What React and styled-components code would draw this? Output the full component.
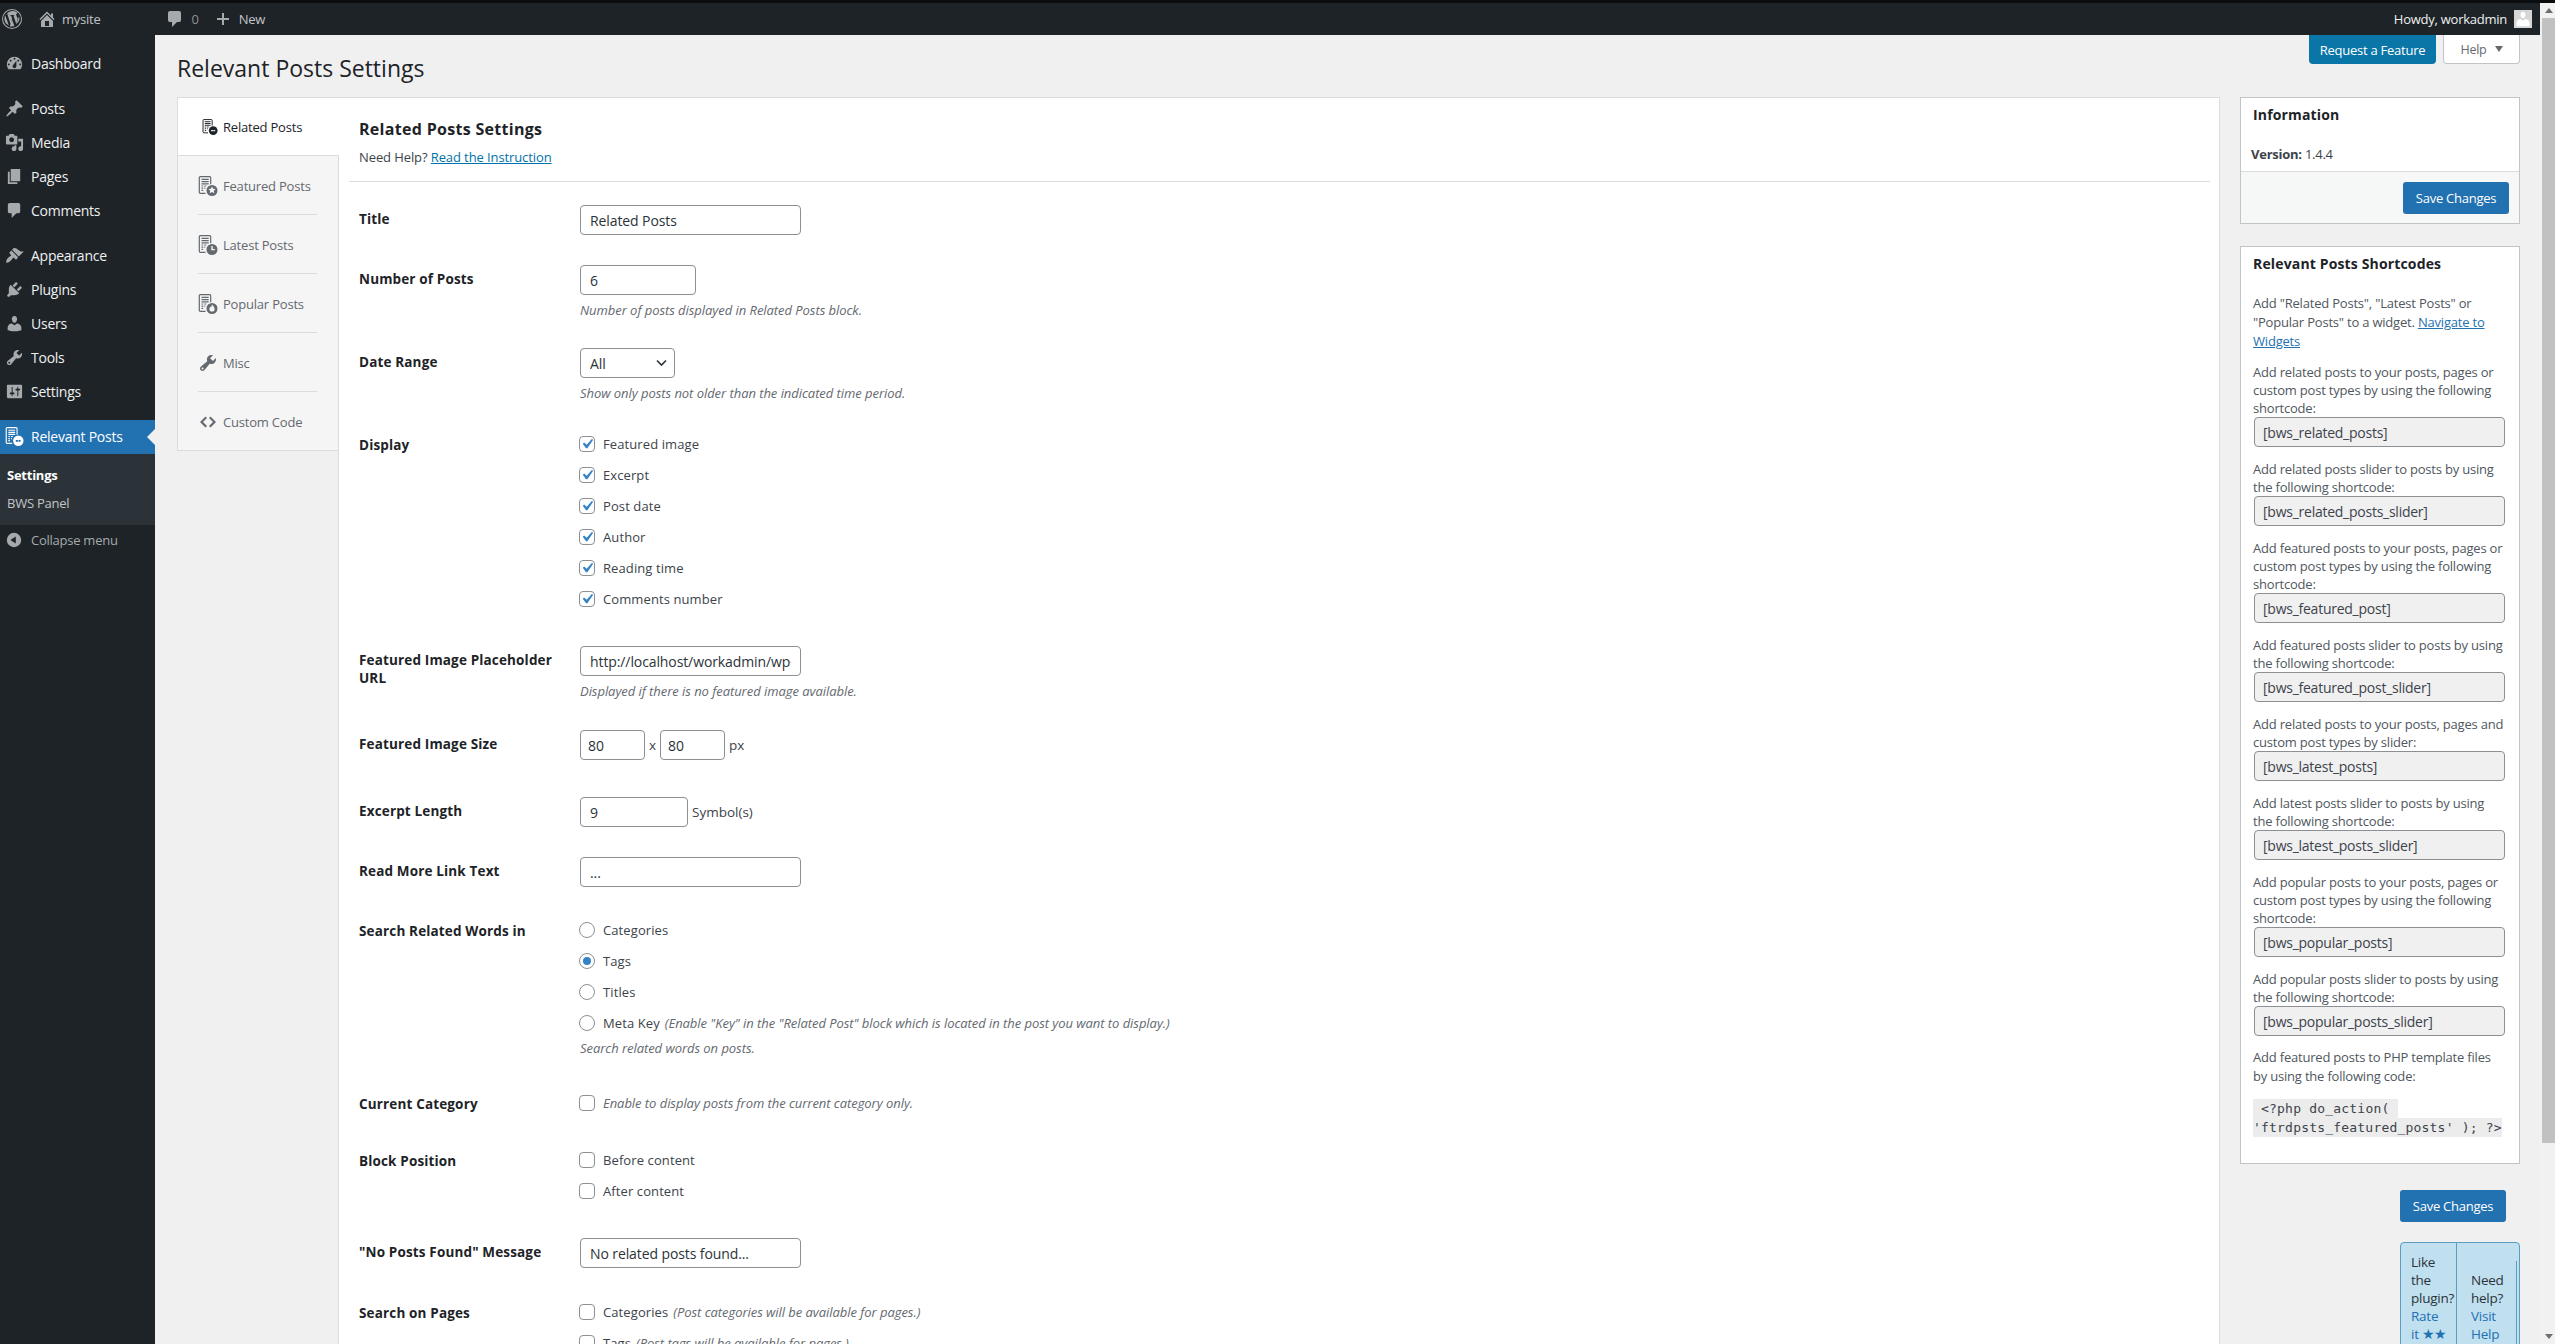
import React from "react";
import styled, { createGlobalStyle } from "styled-components";

const FONT = `"Open Sans", "Noto Sans", sans-serif`;

const GlobalStyle = createGlobalStyle`
  html, body {
    margin: 0;
    height: 100%;
    overflow: hidden;
    background: #f0f0f1;
  }
  * { box-sizing: border-box; }
  body {
    font-family: ${FONT};
    font-size: 13px;
    letter-spacing: -0.25px;
    color: #3c434a;
  }
`;

const Page = styled.div`
  width: 2555px;
  height: 1344px;
  display: flex;
  flex-direction: column;
  overflow: hidden;
  background: #f0f0f1;
`;
const TopStrip = styled.div`
  height: 3px;
  flex: none;
  background: #0b0c0d;
`;
const Screen = styled.div`
  flex: 1;
  min-height: 0;
  display: flex;
`;
const Frame = styled.div`
  flex: 1;
  min-width: 0;
  display: flex;
  flex-direction: column;
`;
const ScrollBar = styled.div`
  width: 15px;
  flex: none;
  background: #f1f1f1;
  padding-left: 2px;
  display: flex;
  flex-direction: column;
  align-items: stretch;
`;
const ScrollArrow = styled.div`
  height: 15px;
  flex: none;
  display: flex;
  align-items: center;
  justify-content: center;
  svg { width: 8px; height: 5px; fill: #6e6e6e; }
`;
const ScrollThumb = styled.div`
  height: 1125px;
  background: #c1c1c1;
`;
const ScrollTrack = styled.div`
  flex: 1;
`;

/* admin bar */
const AdminBar = styled.header`
  height: 32px;
  flex: none;
  background: #1d2327;
  color: #c3c4c7;
  display: flex;
  align-items: center;
  padding: 0 8px 0 2px;
  font-size: 13px;
`;
const BarItem = styled.div`
  display: flex;
  align-items: center;
  gap: ${(p) => p.$gap || 6}px;
  margin-left: ${(p) => p.$left || 0}px;
  color: ${(p) => p.$color || "#c3c4c7"};
  svg { fill: #a7aaad; display: block; }
`;
const BarSpacer = styled.div`
  flex: 1;
`;
const Avatar = styled.div`
  width: 18px;
  height: 18px;
  background: #d6d6d6;
  margin-left: 7px;
  svg { display: block; width: 18px; height: 18px; fill: #fff; }
`;

/* workspace */
const Workspace = styled.div`
  flex: 1;
  min-height: 0;
  display: flex;
`;
const Sidebar = styled.nav`
  width: 155px;
  flex: none;
  background: #1d2327;
  padding-top: 12px;
`;
const MenuItem = styled.div`
  position: relative;
  height: 34px;
  display: flex;
  align-items: center;
  padding: 0 0 2px 5px;
  gap: 7px;
  font-size: 14px;
  margin-top: ${(p) => (p.$sep ? 11 : 0)}px;
  color: ${(p) => (p.$active ? "#fff" : "#f0f0f1")};
  background: ${(p) => (p.$active ? "#2271b1" : "transparent")};
  svg {
    width: 19px;
    height: 19px;
    flex: none;
    fill: ${(p) => (p.$active ? "#fff" : "#a7aaad")};
  }
  ${(p) =>
    p.$active &&
    `&::after {
      content: "";
      position: absolute;
      right: 0;
      top: 9px;
      border: 8px solid transparent;
      border-left: 0;
      border-right-color: #f0f0f1;
    }`}
`;
const SubMenu = styled.div`
  height: 71px;
  background: #2c3338;
  padding-top: 7px;
`;
const SubItem = styled.div`
  height: 28px;
  display: flex;
  align-items: center;
  padding-left: 7px;
  font-size: 13px;
  font-weight: ${(p) => (p.$current ? 700 : 400)};
  color: ${(p) => (p.$current ? "#fff" : "#c3c4c7")};
`;
const Collapse = styled.div`
  height: 32px;
  display: flex;
  align-items: center;
  padding: 0 0 2px 5px;
  gap: 8px;
  color: #a7aaad;
  font-size: 13px;
  svg { width: 18px; height: 18px; fill: #a7aaad; flex: none; }
`;

const Main = styled.main`
  flex: 1;
  min-width: 0;
  padding: 0 20px 0 22px;
  display: flex;
  flex-direction: column;
`;
const HeaderRow = styled.div`
  height: 62px;
  flex: none;
  display: flex;
  align-items: flex-start;
`;
const Title = styled.h1`
  margin: 19px 0 0;
  font-size: 23px;
  line-height: 28px;
  font-weight: 400;
  letter-spacing: 0;
  color: #1d2327;
  flex: 1;
`;
const FeatureTab = styled.div`
  width: 127px;
  height: 29px;
  background: #0a76a8;
  color: #fff;
  border-radius: 0 0 4px 4px;
  display: flex;
  align-items: center;
  justify-content: center;
  font-size: 13px;
  margin-right: 7px;
`;
const HelpTab = styled.div`
  width: 77px;
  height: 29px;
  background: #fff;
  border: 1px solid #c3c4c7;
  border-top: 0;
  border-radius: 0 0 4px 4px;
  color: #646970;
  font-size: 12.5px;
  display: flex;
  align-items: center;
  justify-content: center;
  gap: 8px;
  svg { width: 8px; height: 6px; fill: #646970; }
`;

const Columns = styled.div`
  flex: 1;
  min-height: 0;
  display: flex;
  gap: 20px;
  align-items: flex-start;
`;
const Panel = styled.section`
  width: 2043px;
  flex: none;
  display: flex;
  align-items: flex-start;
`;
const TabList = styled.div`
  width: 162px;
  flex: none;
  display: flex;
  flex-direction: column;
  position: relative;
  z-index: 1;
`;
const Tab = styled.div`
  height: 59px;
  display: flex;
  align-items: center;
  gap: 5px;
  padding: 1px 0 0 20px;
  font-size: 13px;
  letter-spacing: -0.2px;
  position: relative;
  color: ${(p) => (p.$active ? "#1d2327" : "#646970")};
  background: ${(p) => (p.$active ? "#fff" : "#f5f5f5")};
  border-left: 1px solid #dcdcde;
  border-top: ${(p) => (p.$active ? "1px solid #dcdcde" : "0")};
  border-right: ${(p) => (p.$active ? "0" : "1px solid #dcdcde")};
  border-bottom: ${(p) => (p.$active || p.$last ? "1px solid #dcdcde" : "0")};
  ${(p) =>
    p.$divider &&
    `&::after {
      content: "";
      position: absolute;
      left: 20px;
      bottom: 0;
      width: 119px;
      height: 1px;
      background: #dcdcde;
    }`}
  svg {
    width: ${(p) => (p.$active ? 16 : 20)}px;
    height: ${(p) => (p.$active ? 18 : 20)}px;
    margin-left: ${(p) => (p.$active ? 4 : 0)}px;
    flex: none;
    display: block;
    fill: currentColor;
  }
`;
const Content = styled.div`
  flex: 1;
  min-width: 0;
  margin-left: -1px;
  background: #fff;
  border: 1px solid #dcdcde;
  height: 1400px;
`;
const ContentHead = styled.div`
  margin: 0 9px 0 10px;
  padding: 20px 0 15px 10px;
  border-bottom: 1px solid #dcdcde;
`;
const SectionTitle = styled.h2`
  margin: 0;
  font-size: 16px;
  line-height: 22px;
  font-weight: 700;
  letter-spacing: 0.3px;
  color: #1d2327;
`;
const HelpLine = styled.div`
  margin-top: 8px;
  font-size: 13px;
  letter-spacing: -0.1px;
  line-height: 18px;
`;
const DocLink = styled.a`
  color: #0073aa;
  text-decoration: underline;
`;
const Form = styled.div`
  padding: 23px 0 0 20px;
  display: flex;
  flex-direction: column;
  gap: 30px;
`;
const Row = styled.div`
  display: grid;
  grid-template-columns: 221px 1fr;
  min-height: ${(p) => p.$h}px;
`;
const Label = styled.div`
  padding-top: 5px;
  padding-right: 11px;
  font-size: 13.5px;
  letter-spacing: 0.15px;
  line-height: 18px;
  font-weight: 700;
  color: #1d2327;
`;
const Field = styled.div`
  display: flex;
  flex-direction: column;
  align-items: flex-start;
`;
const Inline = styled.div`
  display: flex;
  align-items: center;
  gap: ${(p) => p.$gap || 4}px;
  height: 30px;
  font-size: 13.5px;
  letter-spacing: 0;
`;
const TextInput = styled.input`
  width: ${(p) => p.$w || 221}px;
  height: 30px;
  padding: 0 ${(p) => p.$pad || 9}px;
  border: 1px solid #8c8f94;
  border-radius: 4px;
  background: #fff;
  color: #2c3338;
  font: inherit;
  font-size: 14px;
  letter-spacing: -0.1px;
  outline: none;
`;
const SelectWrap = styled.div`
  position: relative;
  width: 95px;
  height: 30px;
  svg {
    position: absolute;
    right: 8px;
    top: 11px;
    width: 11px;
    height: 8px;
    fill: none;
    stroke: #2c3338;
    stroke-width: 1.6;
    pointer-events: none;
  }
`;
const Select = styled.select`
  width: 100%;
  height: 100%;
  appearance: none;
  border: 1px solid #8c8f94;
  border-radius: 4px;
  background: #fff;
  padding: 0 9px;
  color: #2c3338;
  font: inherit;
  font-size: 14px;
  letter-spacing: -0.1px;
`;
const Hint = styled.div`
  margin-top: ${(p) => p.$top ?? 7}px;
  font-size: 13px;
  letter-spacing: -0.05px;
  line-height: 16px;
  font-style: italic;
  color: #646970;
`;
const Option = styled.div`
  height: 26px;
  margin-left: -1px;
  display: flex;
  align-items: center;
  gap: 8px;
  font-size: 13px;
  letter-spacing: 0.1px;
  color: #3c434a;
  & + & { margin-top: 5px; }
`;
const InlineHint = styled.span`
  font-size: 13px;
  letter-spacing: -0.05px;
  font-style: italic;
  color: #646970;
  margin-left: ${(p) => p.$left ?? -3}px;
`;
const CheckBox = styled.span`
  width: 16px;
  height: 16px;
  flex: none;
  background: #fff;
  border: 1px solid #8c8f94;
  border-radius: ${(p) => (p.$round ? "50%" : "4px")};
  display: flex;
  align-items: center;
  justify-content: center;
  svg { width: 20px; height: 20px; fill: #3582c4; flex: none; }
`;
const RadioDot = styled.span`
  width: 8px;
  height: 8px;
  border-radius: 50%;
  background: #3582c4;
`;

/* right column */
const Aside = styled.aside`
  width: 280px;
  flex: none;
  display: flex;
  flex-direction: column;
  align-items: flex-end;
`;
const Box = styled.div`
  width: 100%;
  background: #fff;
  border: 1px solid #c3c4c7;
  margin-bottom: ${(p) => p.$after || 0}px;
`;
const BoxBody = styled.div`
  padding: 7px 12px 0;
  height: ${(p) => p.$h}px;
`;
const BoxTitle = styled.h3`
  margin: 0;
  font-size: 14px;
  letter-spacing: 0.15px;
  line-height: 20px;
  font-weight: 700;
  color: #1d2327;
`;
const Version = styled.div`
  margin: 19px 0 0 -2px;
  line-height: 20px;
  font-size: 13px;
  b { font-weight: 700; }
`;
const BoxFooter = styled.div`
  height: 52px;
  background: #f6f7f7;
  border-top: 1px solid #dcdcde;
  padding: 10px 10px 0 0;
  display: flex;
  justify-content: flex-end;
`;
const SaveButton = styled.button`
  width: 106px;
  height: 32px;
  margin-top: ${(p) => p.$top || 0}px;
  margin-right: ${(p) => p.$right || 0}px;
  background: #2271b1;
  color: #fff;
  border: 0;
  border-radius: 3px;
  padding: 0;
  font: inherit;
  letter-spacing: inherit;
  font-size: 13px;
`;
const Para = styled.p`
  margin: ${(p) => p.$top ?? 13}px 0 0;
  max-width: 252px;
  font-size: 13px;
  letter-spacing: -0.2px;
  line-height: ${(p) => p.$lh || 18}px;
  color: #50575e;
  a { color: #2271b1; text-decoration: underline; }
`;
const Shortcode = styled.input`
  display: block;
  width: 251px;
  height: 30px;
  margin-left: 1px;
  padding: 0 8px;
  border: 1px solid #8c8f94;
  border-radius: 4px;
  background: #f0f0f1;
  color: #3c434a;
  font: inherit;
  letter-spacing: inherit;
  font-size: 14px;
`;
const CodeBlock = styled.div`
  margin-top: 13px;
  font-family: "DejaVu Sans Mono", "Liberation Mono", monospace;
  font-size: 13px;
  letter-spacing: 0.2px;
  line-height: 19px;
  color: #3c434a;
  white-space: pre-wrap;
  code {
    font: inherit;
    background: #ececec;
    box-decoration-break: clone;
    padding: 2px 0;
  }
`;
const Feedback = styled.div`
  width: 120px;
  height: 140px;
  margin-top: 20px;
  display: flex;
  background: #c0e0f0;
  border: 1px solid #5b9dc0;
  border-radius: 4px 4px 0 0;
  font-size: 13.5px;
  line-height: 18px;
  color: #2c3338;
`;
const FeedbackCell = styled.div`
  position: relative;
  width: ${(p) => p.$w}px;
  flex: none;
  padding: ${(p) => p.$pad};
  border-right: ${(p) => (p.$line ? "1px solid #5b9dc0" : "0")};
  white-space: pre-line;
  a { color: #2271b1; text-decoration: none; }
  i { font-style: normal; color: #2271b1; letter-spacing: -1px; }
  ${(p) =>
    !p.$line &&
    `&::after {
      content: "";
      position: absolute;
      right: 2px;
      top: 18px;
      bottom: 0;
      width: 1px;
      background: #5b9dc0;
    }`}
`;

/* dashicons */
const dash = {
  dashboard: "M3.76 16h12.48c1.1-1.37 1.76-3.11 1.76-5 0-4.42-3.58-8-8-8s-8 3.58-8 8c0 1.89.66 3.63 1.76 5zM10 4c.55 0 1 .45 1 1s-.45 1-1 1-1-.45-1-1 .45-1 1-1zM6 6c.55 0 1 .45 1 1s-.45 1-1 1-1-.45-1-1 .45-1 1-1zm8 0c.55 0 1 .45 1 1s-.45 1-1 1-1-.45-1-1 .45-1 1-1zm-5.37 5.55L12 7v6c0 1.1-.9 2-2 2s-2-.9-2-2c0-.57.24-1.08.63-1.45zM4 10c.55 0 1 .45 1 1s-.45 1-1 1-1-.45-1-1 .45-1 1-1zm12 0c.55 0 1 .45 1 1s-.45 1-1 1-1-.45-1-1 .45-1 1-1z",
  post: "M10.44 3.02l1.82-1.82 6.36 6.35-1.83 1.82c-1.05-.68-2.48-.57-3.41.36l-.75.75c-.92.93-1.04 2.35-.35 3.41l-1.83 1.82-2.41-2.41-2.8 2.79c-.42.42-3.38 2.71-3.8 2.29s1.86-3.39 2.28-3.81l2.79-2.79L4.1 9.36l1.83-1.82c1.05.69 2.48.57 3.4-.36l.75-.75c.93-.92 1.05-2.35.36-3.41z",
  media: "M13 11V4c0-.55-.45-1-1-1h-1.67L9 1H5L3.67 3H2c-.55 0-1 .45-1 1v7c0 .55.45 1 1 1h10c.55 0 1-.45 1-1zM7 4.5c1.38 0 2.5 1.12 2.5 2.5S8.38 9.5 7 9.5 4.5 8.38 4.5 7 5.62 4.5 7 4.5zM14 6h5v10.5c0 1.38-1.12 2.5-2.5 2.5S14 17.88 14 16.5s1.12-2.5 2.5-2.5c.17 0 .34.02.5.05V9h-3V6zm-4 8.05V13h2v3.5c0 1.38-1.12 2.5-2.5 2.5S7 17.88 7 16.5 8.12 14 9.5 14c.17 0 .34.02.5.05z",
  page: "M6 15V2h10v13H6zm-1 1h8v2H3V5h2v11z",
  comment: "M5 2h9q.82 0 1.41.59T16 4v7q0 .82-.59 1.41T14 13h-2l-5 5v-5H5q-.82 0-1.41-.59T3 11V4q0-.82.59-1.41T5 2z",
  appearance: "M14.48 11.06L7.41 3.99l1.5-1.5c.5-.56 2.3-.47 3.51.32 1.21.8 1.43 1.28 2.91 2.1 1.18.64 2.45 1.26 4.45.85zM13.77 11.77L6.7 4.7 4.93 6.47c-.39.39-.39 1.02 0 1.41l1.06 1.06c.39.39.39 1.03 0 1.42-.6.6-3.2 2.1-4.2 4.1-.5 1-.7 2.5-.4 2.9.4.4 1.9.1 2.9-.4 2-1 3.5-3.6 4.1-4.2.39-.39 1.03-.39 1.42 0l1.06 1.06c.39.39 1.02.39 1.41 0z",
  plugin: "M13.11 4.36L9.87 7.6 8 5.73l3.24-3.24c.35-.34 1.05-.2 1.56.32.52.51.66 1.21.31 1.55zm-8 1.77l.91-1.12 9.01 9.01-1.19.84c-.71.71-2.63 1.16-3.82 1.16H6.14L4.9 17.26c-.59.59-1.54.59-2.12 0-.59-.58-.59-1.53 0-2.12l1.24-1.24v-3.88c0-1.13.4-3.19 1.09-3.89zm7.26 3.97l3.24-3.24c.34-.35 1.04-.21 1.55.31.52.51.66 1.21.31 1.55l-3.24 3.25z",
  users: "M10 9.25c-2.27 0-2.73-3.44-2.73-3.44C7 4.02 7.82 2 9.97 2c2.16 0 2.98 2.02 2.71 3.81 0 0-.41 3.44-2.68 3.44zm0 2.57L12.72 10c2.39 0 4.52 2.33 4.52 4.53v2.49s-3.65 1.13-7.24 1.13c-3.65 0-7.24-1.13-7.24-1.13v-2.49c0-2.25 1.94-4.48 4.47-4.48z",
  tools: "M16.68 9.77c-1.34 1.34-3.3 1.67-4.95.99l-5.41 6.52c-.99.99-2.59.99-3.58 0s-.99-2.59 0-3.57l6.52-5.42c-.68-1.65-.35-3.61.99-4.95 1.28-1.28 3.12-1.62 4.72-1.06l-2.89 2.89 2.82 2.82 2.86-2.87c.53 1.58.18 3.39-1.08 4.65zM3.81 16.21c.4.39 1.04.39 1.43 0 .4-.4.4-1.04 0-1.43-.39-.4-1.03-.4-1.43 0-.39.39-.39 1.03 0 1.43z",
  settings: "M18 16V4c0-.55-.45-1-1-1H3c-.55 0-1 .45-1 1v12c0 .55.45 1 1 1h14c.55 0 1-.45 1-1zM8 11h1c.55 0 1 .45 1 1s-.45 1-1 1H8v1.5c0 .28-.22.5-.5.5s-.5-.22-.5-.5V13H6c-.55 0-1-.45-1-1s.45-1 1-1h1V5.5c0-.28.22-.5.5-.5s.5.22.5.5V11zm5-2h-1c-.55 0-1-.45-1-1s.45-1 1-1h1V5.5c0-.28.22-.5.5-.5s.5.22.5.5V7h1c.55 0 1 .45 1 1s-.45 1-1 1h-1v5.5c0 .28-.22.5-.5.5s-.5-.22-.5-.5V9z",
  home: "M16 8.5l1.53 1.53-1.06 1.06L10 4.62l-6.47 6.47-1.06-1.06L10 2.5l4 4v-2h2v4zm-6-2.46l6 5.99V18H4v-5.97zM12 17v-5H8v5h4z",
  plus: "M4 9h5V4h2v5h5v2h-5v5H9v-5H4V9z",
  check: "M14.83 4.89l1.34.94-5.81 8.38H9.02L5.78 9.67l1.34-1.25 2.57 2.4z",
  collapse: "M10 2a8 8 0 1 1 0 16 8 8 0 0 1 0-16zm2 4l-6 4 6 4z",
  user: "M10 9.25c-2.27 0-2.73-3.44-2.73-3.44C7 4.02 7.82 2 9.97 2c2.16 0 2.98 2.02 2.71 3.81 0 0-.41 3.44-2.68 3.44zm0 2.57L12.72 10c2.39 0 4.52 2.33 4.52 4.53V18H2.76v-3.47c0-2.25 1.94-4.48 4.47-4.48z",
};

const Dash = ({ name, size }) => (
  <svg viewBox="0 0 20 20" width={size} height={size}>
    <path d={dash[name]} />
  </svg>
);

const WpLogo = () => (
  <svg viewBox="0 0 20 20" width="20" height="20">
    <path
      fillRule="evenodd"
      d="M10 0a10 10 0 1 1 0 20 10 10 0 0 1 0-20zm0 1a9 9 0 1 0 0 18 9 9 0 0 0 0-18zM3.2 6.3l3.7 10.1A7.6 7.6 0 0 1 2.4 10c0-1.3.3-2.6.8-3.7zm12.4 3.3c0 .9-.3 1.6-.6 2.6l-.8 2.6-2.8-8.3.9-.1c.2 0 .2-.4 0-.4-1.3.1-2.9.1-4.1 0-.3 0-.3.4 0 .4l.8.1 1.2 3.3-1.7 5.1L5.7 5.9l.9-.1c.3 0 .2-.4 0-.4-.7.1-1.6.1-2.2.1A7.6 7.6 0 0 1 15.9 4c-1 0-1.7.9-1.7 1.8 0 .9.5 1.6 1 2.4.4.6.4 1 .4 1.4zm-5.5 1.1l2.3 6.4a7.6 7.6 0 0 1-4.7.1zm6.500-4.300c.8 1.500 1 3.100.7 4.400a7.600 7.600 0 0 1-3 4.500l2.300-6.700c.4-1 .6-1.700.5-2.200z"
    />
  </svg>
);

// document with a round badge, used for the plugin tabs and its menu entry
const Badge = ({ kind, mark }) => {
  if (kind === "link")
    return <path d="M11.400 14.500h5.200" stroke={mark} strokeWidth="1.800" strokeDasharray="2.200 .6" fill="none" />;
  if (kind === "star")
    return <path fill={mark} d="M14 10.500l1.100 2.300 2.500.3-1.800 1.700.5 2.500-2.300-1.200-2.300 1.200.5-2.500-1.800-1.700 2.500-.3z" />;
  if (kind === "clock")
    return <path d="M14 11v3.600h2.800" stroke={mark} strokeWidth="1.400" fill="none" />;
  return <path fill={mark} d="M14 10.300c.4 1.500 2.600 2.600 2.600 4.600a2.600 2.600 0 0 1-5.200 0c0-1 .5-1.800 1.100-2.400.1.600.3 1 .7 1.100.3-1 .3-2.300.8-3.300z" />;
};

const PostIcon = ({ badge, mark = "#f5f5f5" }) => (
  <svg viewBox="0 0 20 20">
    <path
      d="M7.500 17.300H2.300a1 1 0 0 1-1-1V1.700a1 1 0 0 1 1-1h9.400a1 1 0 0 1 1 1v6.500M3.500 3.400h7.200M3.500 5.600h7.200M3.500 7.800h7.200M3.500 10h1.700M6.300 10h2M3.500 12.200h1.700M6.300 12.200h1M3.500 14.400h1.700"
      stroke="currentColor"
      strokeWidth="1.200"
      fill="none"
    />
    <circle cx="14" cy="14.500" r="5.500" />
    <Badge kind={badge} mark={mark} />
  </svg>
);

const WrenchIcon = () => (
  <svg viewBox="0 0 20 20">
    <path d={dash.tools} />
  </svg>
);

const CodeIcon = () => (
  <svg viewBox="0 0 20 20">
    <path d="M7.500 4.500l1.500 1.500-4 4 4 4-1.500 1.500L2 10zM12.500 4.500L11 6l4 4-4 4 1.500 1.500L18 10z" />
  </svg>
);

const Caret = () => (
  <svg viewBox="0 0 8 6">
    <path d="M0 0h8L4 6z" />
  </svg>
);

const Check = ({ on }) => <CheckBox>{on && <Dash name="check" />}</CheckBox>;
const Radio = ({ on }) => <CheckBox $round>{on && <RadioDot />}</CheckBox>;

const menuTop = [
  { label: "Dashboard", icon: "dashboard" },
  { label: "Posts", icon: "post", sep: true },
  { label: "Media", icon: "media" },
  { label: "Pages", icon: "page" },
  { label: "Comments", icon: "comment" },
  { label: "Appearance", icon: "appearance", sep: true },
  { label: "Plugins", icon: "plugin" },
  { label: "Users", icon: "users" },
  { label: "Tools", icon: "tools" },
  { label: "Settings", icon: "settings" },
];

const tabs = [
  { label: "Featured Posts", icon: <PostIcon badge="star" /> },
  { label: "Latest Posts", icon: <PostIcon badge="clock" /> },
  { label: "Popular Posts", icon: <PostIcon badge="fire" /> },
  { label: "Misc", icon: <WrenchIcon /> },
  { label: "Custom Code", icon: <CodeIcon />, last: true },
];

const displayOptions = [
  "Featured image",
  "Excerpt",
  "Post date",
  "Author",
  "Reading time",
  "Comments number",
];

const shortcodes = [
  ["Add related posts to your posts, pages or custom post types by using the following shortcode:", "[bws_related_posts]"],
  ["Add related posts slider to posts by using the following shortcode:", "[bws_related_posts_slider]"],
  ["Add featured posts to your posts, pages or custom post types by using the following shortcode:", "[bws_featured_post]"],
  ["Add featured posts slider to posts by using the following shortcode:", "[bws_featured_post_slider]"],
  ["Add related posts to your posts, pages and custom post types by slider:", "[bws_latest_posts]"],
  ["Add latest posts slider to posts by using the following shortcode:", "[bws_latest_posts_slider]"],
  ["Add popular posts to your posts, pages or custom post types by using the following shortcode:", "[bws_popular_posts]"],
  ["Add popular posts slider to posts by using the following shortcode:", "[bws_popular_posts_slider]"],
];

function App() {
  return (
    <Page>
      <GlobalStyle />
      <TopStrip />
      <Screen>
        <Frame>
          <AdminBar>
            <BarItem>
              <WpLogo />
            </BarItem>
            <BarItem $left={15} $gap={5}>
              <Dash name="home" size={20} />
              mysite
            </BarItem>
            <BarItem $left={65} $gap={6} $color="#8c8f94">
              <Dash name="comment" size={20} />0
            </BarItem>
            <BarItem $left={14} $gap={6}>
              <Dash name="plus" size={20} />
              New
            </BarItem>
            <BarSpacer />
            <BarItem $color="#f0f0f1">Howdy, workadmin</BarItem>
            <Avatar>
              <Dash name="user" />
            </Avatar>
          </AdminBar>
          <Workspace>
            <Sidebar>
              {menuTop.map((m) => (
                <MenuItem key={m.label} $sep={m.sep}>
                  <Dash name={m.icon} />
                  {m.label}
                </MenuItem>
              ))}
              <MenuItem $sep $active>
                <PostIcon badge="link" mark="#2271b1" />
                Relevant Posts
              </MenuItem>
              <SubMenu>
                <SubItem $current>Settings</SubItem>
                <SubItem>BWS Panel</SubItem>
              </SubMenu>
              <Collapse>
                <Dash name="collapse" />
                Collapse menu
              </Collapse>
            </Sidebar>
            <Main>
              <HeaderRow>
                <Title>Relevant Posts Settings</Title>
                <FeatureTab>Request a Feature</FeatureTab>
                <HelpTab>
                  Help
                  <Caret />
                </HelpTab>
              </HeaderRow>
              <Columns>
                <Panel>
                  <TabList>
                    <Tab $active>
                      <PostIcon badge="link" mark="#fff" />
                      Related Posts
                    </Tab>
                    {tabs.map((t) => (
                      <Tab key={t.label} $last={t.last} $divider={!t.last}>
                        {t.icon}
                        {t.label}
                      </Tab>
                    ))}
                  </TabList>
                  <Content>
                    <ContentHead>
                      <SectionTitle>Related Posts Settings</SectionTitle>
                      <HelpLine>
                        Need Help? <DocLink href="#">Read the Instruction</DocLink>
                      </HelpLine>
                    </ContentHead>
                    <Form>
                      <Row $h={30}>
                        <Label>Title</Label>
                        <Field>
                          <TextInput defaultValue="Related Posts" />
                        </Field>
                      </Row>
                      <Row $h={53}>
                        <Label>Number of Posts</Label>
                        <Field>
                          <TextInput $w={116} defaultValue="6" />
                          <Hint>Number of posts displayed in Related Posts block.</Hint>
                        </Field>
                      </Row>
                      <Row $h={53}>
                        <Label>Date Range</Label>
                        <Field>
                          <SelectWrap>
                            <Select defaultValue="All">
                              <option>All</option>
                            </Select>
                            <svg viewBox="0 0 11 8">
                              <path d="M1 1.500l4.500 4.500L10 1.500" />
                            </svg>
                          </SelectWrap>
                          <Hint>Show only posts not older than the indicated time period.</Hint>
                        </Field>
                      </Row>
                      <Row $h={185}>
                        <Label>Display</Label>
                        <Field>
                          {displayOptions.map((o) => (
                            <Option key={o}>
                              <Check on />
                              {o}
                            </Option>
                          ))}
                        </Field>
                      </Row>
                      <Row $h={54}>
                        <Label>Featured Image Placeholder URL</Label>
                        <Field>
                          <TextInput defaultValue="http://localhost/workadmin/wp-content/plugins/relevant/images/no_preview.jpg" />
                          <Hint>Displayed if there is no featured image available.</Hint>
                        </Field>
                      </Row>
                      <Row $h={37}>
                        <Label>Featured Image Size</Label>
                        <Field>
                          <Inline>
                            <TextInput $w={65} $pad={7} defaultValue="80" />
                            x
                            <TextInput $w={65} $pad={7} defaultValue="80" />
                            px
                          </Inline>
                        </Field>
                      </Row>
                      <Row $h={30}>
                        <Label>Excerpt Length</Label>
                        <Field>
                          <Inline>
                            <TextInput $w={108} defaultValue="9" />
                            Symbol(s)
                          </Inline>
                        </Field>
                      </Row>
                      <Row $h={30}>
                        <Label>Read More Link Text</Label>
                        <Field>
                          <TextInput defaultValue="..." />
                        </Field>
                      </Row>
                      <Row $h={143}>
                        <Label>Search Related Words in</Label>
                        <Field>
                          <Option>
                            <Radio />
                            Categories
                          </Option>
                          <Option>
                            <Radio on />
                            Tags
                          </Option>
                          <Option>
                            <Radio />
                            Titles
                          </Option>
                          <Option>
                            <Radio />
                            Meta Key
                            <InlineHint>(Enable "Key" in the "Related Post" block which is located in the post you want to display.)</InlineHint>
                          </Option>
                          <Hint $top={4}>Search related words on posts.</Hint>
                        </Field>
                      </Row>
                      <Row $h={27}>
                        <Label>Current Category</Label>
                        <Field>
                          <Option>
                            <Check />
                            <InlineHint $left={0}>Enable to display posts from the current category only.</InlineHint>
                          </Option>
                        </Field>
                      </Row>
                      <Row $h={61}>
                        <Label>Block Position</Label>
                        <Field>
                          <Option>
                            <Check />
                            Before content
                          </Option>
                          <Option>
                            <Check />
                            After content
                          </Option>
                        </Field>
                      </Row>
                      <Row $h={31}>
                        <Label>"No Posts Found" Message</Label>
                        <Field>
                          <TextInput defaultValue="No related posts found..." />
                        </Field>
                      </Row>
                      <Row $h={60}>
                        <Label>Search on Pages</Label>
                        <Field>
                          <Option>
                            <Check />
                            Categories
                            <InlineHint>(Post categories will be available for pages.)</InlineHint>
                          </Option>
                          <Option>
                            <Check />
                            Tags
                            <InlineHint>(Post tags will be available for pages.)</InlineHint>
                          </Option>
                        </Field>
                      </Row>
                    </Form>
                  </Content>
                </Panel>
                <Aside>
                  <Box $after={22}>
                    <BoxBody $h={73}>
                      <BoxTitle>Information</BoxTitle>
                      <Version>
                        <b>Version:</b> 1.4.4
                      </Version>
                    </BoxBody>
                    <BoxFooter>
                      <SaveButton>Save Changes</SaveButton>
                    </BoxFooter>
                  </Box>
                  <Box>
                    <BoxBody $h={916}>
                      <BoxTitle>Relevant Posts Shortcodes</BoxTitle>
                      <Para $top={20} $lh={19}>
                        Add "Related Posts", "Latest Posts" or "Popular Posts" to a widget. <a href="#">Navigate to Widgets</a>
                      </Para>
                      {shortcodes.map(([text, code], i) => (
                        <React.Fragment key={code}>
                          <Para $top={i === 0 ? 12 : 13}>{text}</Para>
                          <Shortcode readOnly value={code} />
                        </React.Fragment>
                      ))}
                      <Para $top={12} $lh={19}>Add featured posts to PHP template files by using the following code:</Para>
                      <CodeBlock>
                        <code>{" <?php do_action( 'ftrdpsts_featured_posts' ); ?>"}</code>
                      </CodeBlock>
                    </BoxBody>
                  </Box>
                  <SaveButton $top={26} $right={14}>Save Changes</SaveButton>
                  <Feedback>
                    <FeedbackCell $w={56} $pad="10px 0 0 10px" $line>
                      {"Like the plugin?\n"}
                      <a href="#">{"Rate\nit "}</a>
                      <i>★★</i>
                    </FeedbackCell>
                    <FeedbackCell $w={62} $pad="28px 4px 0 14px">
                      Need help? <a href="#">Visit Help Center</a>
                    </FeedbackCell>
                  </Feedback>
                </Aside>
              </Columns>
            </Main>
          </Workspace>
        </Frame>
        <ScrollBar>
          <ScrollArrow>
            <svg viewBox="0 0 8 5">
              <path d="M4 0l4 5H0z" />
            </svg>
          </ScrollArrow>
          <ScrollThumb />
          <ScrollTrack />
          <ScrollArrow>
            <svg viewBox="0 0 8 5">
              <path d="M0 0h8L4 5z" />
            </svg>
          </ScrollArrow>
        </ScrollBar>
      </Screen>
    </Page>
  );
}

export default App;
